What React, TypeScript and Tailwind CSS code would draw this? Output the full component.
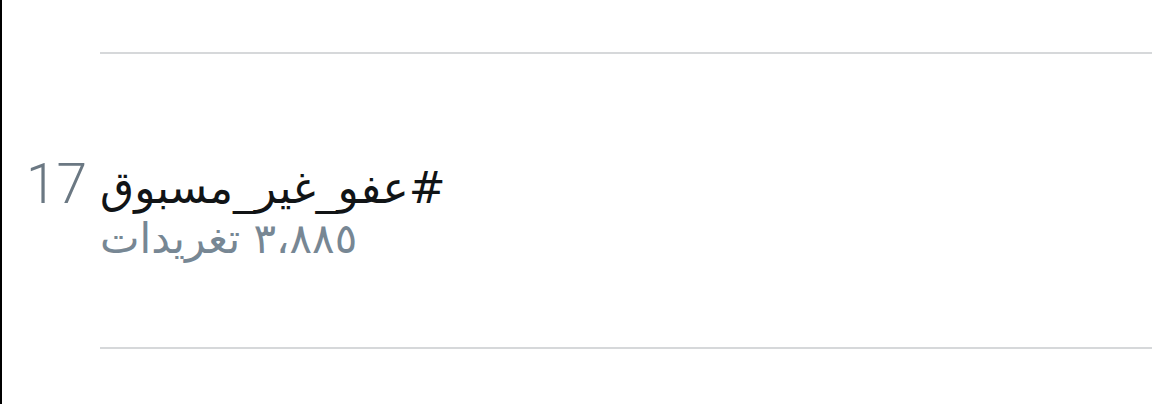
export default function App() {
  return (
    <div className="flex h-[404px] w-[1152px] flex-col overflow-hidden border-l-2 border-black bg-white">
      <div className="h-[52px] shrink-0" />
      <div className="ml-[98px] h-[2px] shrink-0 bg-[#d6d8da]" />

      {/* Trend row */}
      <div className="flex h-[293px] shrink-0 items-baseline pt-[100px]">
        <div className="w-[98px] shrink-0 pl-[24px] font-['Roboto',sans-serif] text-[55px] font-light leading-[60px] text-[#6b7883]">
          17
        </div>
        <div className="flex flex-col items-start">
          <div
            dir="rtl"
            className="font-['DejaVu_Sans',sans-serif] text-[44px] leading-[56px] text-[#111416]"
          >
            #عفو_غير_مسبوق
          </div>
          <div
            dir="rtl"
            className="font-['DejaVu_Sans',sans-serif] text-[42px] leading-[46px] text-[#778794]"
          >
            ٣،٨٨٥ تغريدات
          </div>
        </div>
      </div>

      <div className="ml-[98px] h-[2px] shrink-0 bg-[#d6d8da]" />
    </div>
  );
}
